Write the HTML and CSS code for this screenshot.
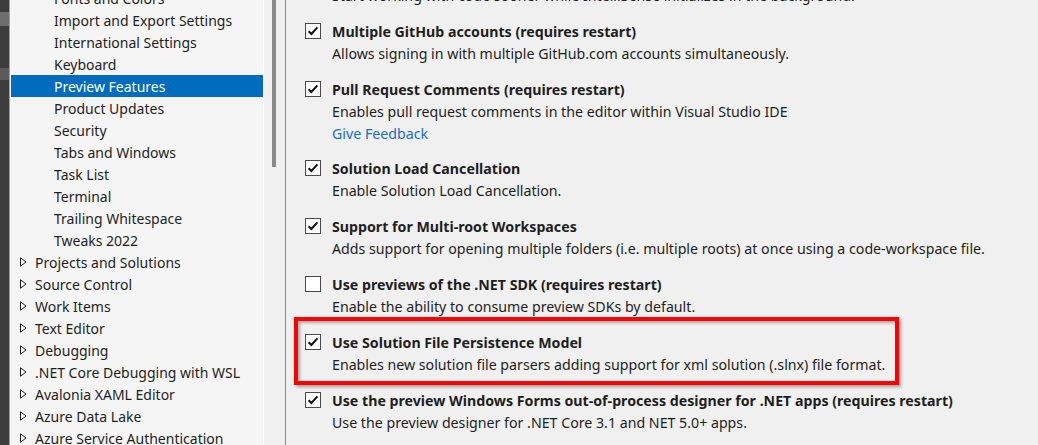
FILE: index.html
```html
<!DOCTYPE html>
<html lang="en">
<head>
<meta charset="utf-8">
<title>Options - Preview Features</title>
<link rel="stylesheet" href="styles.css">
</head>
<body>
<div class="window">
  <div class="backdrop"></div>
  <nav class="tree-pane">
    <ul class="tree">
      <li class="row child">Fonts and Colors</li>
      <li class="row child">Import and Export Settings</li>
      <li class="row child">International Settings</li>
      <li class="row child">Keyboard</li>
      <li class="row child selected">Preview Features</li>
      <li class="row child">Product Updates</li>
      <li class="row child">Security</li>
      <li class="row child">Tabs and Windows</li>
      <li class="row child">Task List</li>
      <li class="row child">Terminal</li>
      <li class="row child">Trailing Whitespace</li>
      <li class="row child">Tweaks 2022</li>
      <li class="row group"><svg class="expander" width="7" height="10" viewBox="0 0 7 10"><path d="M0.5 0.8 L6 5 L0.5 9.2 Z" fill="none" stroke="#1e1e1e" stroke-width="1"/></svg>Projects and Solutions</li>
      <li class="row group"><svg class="expander" width="7" height="10" viewBox="0 0 7 10"><path d="M0.5 0.8 L6 5 L0.5 9.2 Z" fill="none" stroke="#1e1e1e" stroke-width="1"/></svg>Source Control</li>
      <li class="row group"><svg class="expander" width="7" height="10" viewBox="0 0 7 10"><path d="M0.5 0.8 L6 5 L0.5 9.2 Z" fill="none" stroke="#1e1e1e" stroke-width="1"/></svg>Work Items</li>
      <li class="row group"><svg class="expander" width="7" height="10" viewBox="0 0 7 10"><path d="M0.5 0.8 L6 5 L0.5 9.2 Z" fill="none" stroke="#1e1e1e" stroke-width="1"/></svg>Text Editor</li>
      <li class="row group"><svg class="expander" width="7" height="10" viewBox="0 0 7 10"><path d="M0.5 0.8 L6 5 L0.5 9.2 Z" fill="none" stroke="#1e1e1e" stroke-width="1"/></svg>Debugging</li>
      <li class="row group"><svg class="expander" width="7" height="10" viewBox="0 0 7 10"><path d="M0.5 0.8 L6 5 L0.5 9.2 Z" fill="none" stroke="#1e1e1e" stroke-width="1"/></svg>.NET Core Debugging with WSL</li>
      <li class="row group"><svg class="expander" width="7" height="10" viewBox="0 0 7 10"><path d="M0.5 0.8 L6 5 L0.5 9.2 Z" fill="none" stroke="#1e1e1e" stroke-width="1"/></svg>Avalonia XAML Editor</li>
      <li class="row group"><svg class="expander" width="7" height="10" viewBox="0 0 7 10"><path d="M0.5 0.8 L6 5 L0.5 9.2 Z" fill="none" stroke="#1e1e1e" stroke-width="1"/></svg>Azure Data Lake</li>
      <li class="row group"><svg class="expander" width="7" height="10" viewBox="0 0 7 10"><path d="M0.5 0.8 L6 5 L0.5 9.2 Z" fill="none" stroke="#1e1e1e" stroke-width="1"/></svg>Azure Service Authentication</li>
    </ul>
  </nav>
  <div class="vscroll"><div class="thumb"></div></div>
  <div class="divider"></div>
  <main class="content">
    <div class="features">
      <section class="feature partial">
        <p class="desc">Start working with code sooner while IntelliSense initializes in the background.</p>
      </section>
      <section class="feature">
        <label class="title"><svg class="check" width="16" height="16" viewBox="0 0 16 16"><rect x="0.5" y="0.5" width="15" height="15" fill="#fff" stroke="#4a4a4a"/><path d="M3.6 8.2 L6.4 11 L12.4 4.4" fill="none" stroke="#111" stroke-width="2"/></svg>Multiple GitHub accounts (requires restart)</label>
        <p class="desc">Allows signing in with multiple GitHub.com accounts simultaneously.</p>
      </section>
      <section class="feature">
        <label class="title"><svg class="check" width="16" height="16" viewBox="0 0 16 16"><rect x="0.5" y="0.5" width="15" height="15" fill="#fff" stroke="#4a4a4a"/><path d="M3.6 8.2 L6.4 11 L12.4 4.4" fill="none" stroke="#111" stroke-width="2"/></svg>Pull Request Comments (requires restart)</label>
        <p class="desc">Enables pull request comments in the editor within Visual Studio IDE</p>
        <a class="link" href="#">Give Feedback</a>
      </section>
      <section class="feature">
        <label class="title"><svg class="check" width="16" height="16" viewBox="0 0 16 16"><rect x="0.5" y="0.5" width="15" height="15" fill="#fff" stroke="#4a4a4a"/><path d="M3.6 8.2 L6.4 11 L12.4 4.4" fill="none" stroke="#111" stroke-width="2"/></svg>Solution Load Cancellation</label>
        <p class="desc">Enable Solution Load Cancellation.</p>
      </section>
      <section class="feature">
        <label class="title"><svg class="check" width="16" height="16" viewBox="0 0 16 16"><rect x="0.5" y="0.5" width="15" height="15" fill="#fff" stroke="#4a4a4a"/><path d="M3.6 8.2 L6.4 11 L12.4 4.4" fill="none" stroke="#111" stroke-width="2"/></svg>Support for Multi-root Workspaces</label>
        <p class="desc">Adds support for opening multiple folders (i.e. multiple roots) at once using a code-workspace file.</p>
      </section>
      <section class="feature">
        <label class="title"><svg class="check" width="16" height="16" viewBox="0 0 16 16"><rect x="0.5" y="0.5" width="15" height="15" fill="#fff" stroke="#4a4a4a"/></svg>Use previews of the .NET SDK (requires restart)</label>
        <p class="desc">Enable the ability to consume preview SDKs by default.</p>
      </section>
      <section class="feature highlight">
        <label class="title"><svg class="check" width="16" height="16" viewBox="0 0 16 16"><rect x="0.5" y="0.5" width="15" height="15" fill="#fff" stroke="#4a4a4a"/><path d="M3.6 8.2 L6.4 11 L12.4 4.4" fill="none" stroke="#111" stroke-width="2"/></svg>Use Solution File Persistence Model</label>
        <p class="desc">Enables new solution file parsers adding support for xml solution (.slnx) file format.</p>
      </section>
      <section class="feature">
        <label class="title"><svg class="check" width="16" height="16" viewBox="0 0 16 16"><rect x="0.5" y="0.5" width="15" height="15" fill="#fff" stroke="#4a4a4a"/><path d="M3.6 8.2 L6.4 11 L12.4 4.4" fill="none" stroke="#111" stroke-width="2"/></svg>Use the preview Windows Forms out-of-process designer for .NET apps (requires restart)</label>
        <p class="desc">Use the preview designer for .NET Core 3.1 and NET 5.0+ apps.</p>
      </section>
    </div>
  </main>
</div>
</body>
</html>
```

FILE: styles.css
```css
html, body {
  margin: 0;
  padding: 0;
}

body {
  width: 1038px;
  height: 445px;
  overflow: hidden;
  background: #f0f0f0;
  font-family: "Noto Sans", "Open Sans", sans-serif;
  font-size: 14.2px;
  color: #1e1e1e;
}

.window {
  display: flex;
  height: 445px;
}

.backdrop {
  width: 9px;
  flex: none;
  background: linear-gradient(to bottom, #3c3c3c 0, #3c3c3c 12px, #6e6e6e 12px, #6e6e6e 26px, #3c3c3c 26px, #3c3c3c 68px, #5a5a5a 68px, #5a5a5a 80px, #3c3c3c 80px);
}

.tree-pane {
  width: 252px;
  flex: none;
  border-left: 1px solid #a0a0a0;
  border-right: 1px solid #ffffff;
  background: #f5f5f5;
  padding-left: 1px;
  overflow: hidden;
}

.tree {
  list-style: none;
  margin: -13px 0 0 0;
  padding: 0;
}

.row {
  height: 22px;
  display: flex;
  align-items: center;
  white-space: nowrap;
  font-size: 14px;
}

.row.child {
  padding-left: 43px;
}

.row.group {
  padding-left: 9px;
}

.expander {
  flex: none;
  margin-right: 8px;
}

.row.selected {
  background: #006cbe;
  color: #ffffff;
}

.vscroll {
  width: 21px;
  flex: none;
  background: #f0f0f0;
  display: flex;
}

.thumb {
  width: 4px;
  height: 167px;
  margin-left: 8px;
  background: #8a8a8a;
}

.divider {
  width: 1px;
  flex: none;
  background: #8b8b8b;
}

.content {
  flex: 1;
  background: #f0f0f0;
  padding-left: 19px;
  overflow: hidden;
}

.features {
  display: flex;
  flex-direction: column;
  gap: 12px;
  margin-top: -15px;
}

.feature {
  display: flex;
  flex-direction: column;
}

.title {
  height: 24px;
  display: flex;
  align-items: center;
  gap: 11px;
  font-weight: 700;
  white-space: nowrap;
}

.check {
  flex: none;
}

.desc {
  margin: 0;
  height: 22px;
  line-height: 22px;
  padding-left: 27px;
  white-space: nowrap;
}

.link {
  height: 21px;
  line-height: 21px;
  padding-left: 27px;
  color: #1a6dc4;
  text-decoration: none;
  align-self: flex-start;
}

.feature.highlight {
  width: 590px;
  margin: -13px 0 -9px -11px;
  padding: 9px 0 5px 7px;
  border: 4px solid #ff0000;
  box-shadow: 2px 2px 3px rgba(0, 0, 0, 0.35), inset 2px 2px 3px rgba(0, 0, 0, 0.3);
}
```
